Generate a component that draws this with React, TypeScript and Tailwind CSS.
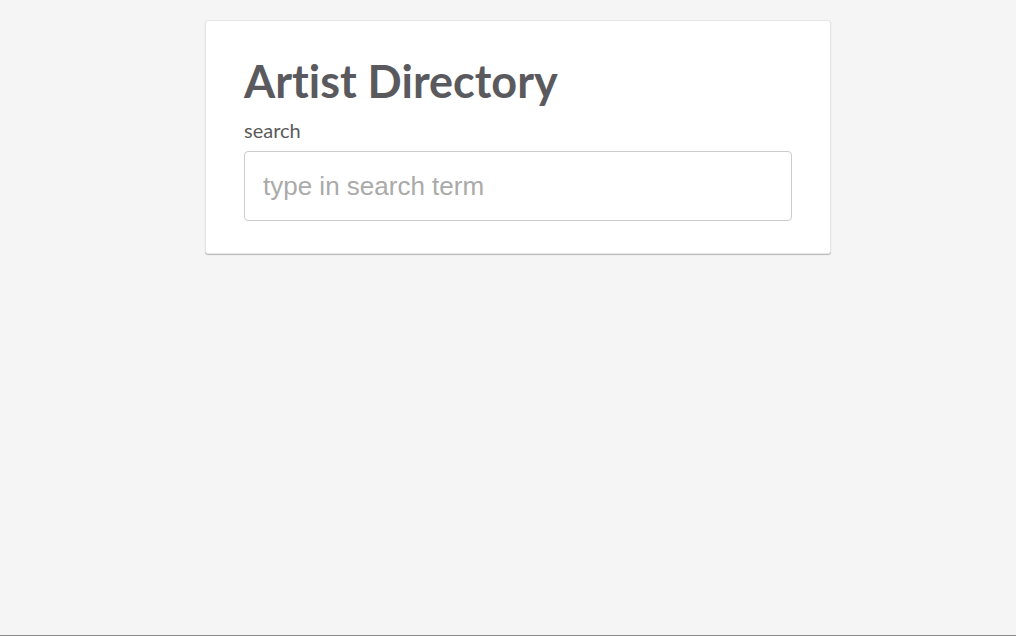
export default function App() {
  return (
    <div className="h-[636px] bg-[#f5f5f5] border-b border-[#8a8a8a] pl-[205px] pt-5 font-['Lato',sans-serif]">
      <div className="w-[626px] bg-white border border-[#e6e6e6] rounded-[3px] shadow-[0_1px_1px_rgba(0,0,0,0.25)] px-[38px] pt-[33px] pb-8">
        <h1 className="text-[45px] leading-[1.2] font-bold text-[#5a5a5e] [font-variant-ligatures:none]">
          Artist Directory
        </h1>
        <label htmlFor="search" className="block mt-[10px] text-[20px] leading-[1.2] text-[#5a5a5a]">
          search
        </label>
        <input
          id="search"
          type="text"
          placeholder="type in search term"
          className="mt-[9px] block w-full h-[70px] rounded-[4px] border border-[#cccccc] bg-white px-[18px] text-[26px] font-['Liberation_Sans',Arial,sans-serif] text-[#555] placeholder:text-[#aaaaaa] outline-none"
        />
      </div>
    </div>
  );
}
